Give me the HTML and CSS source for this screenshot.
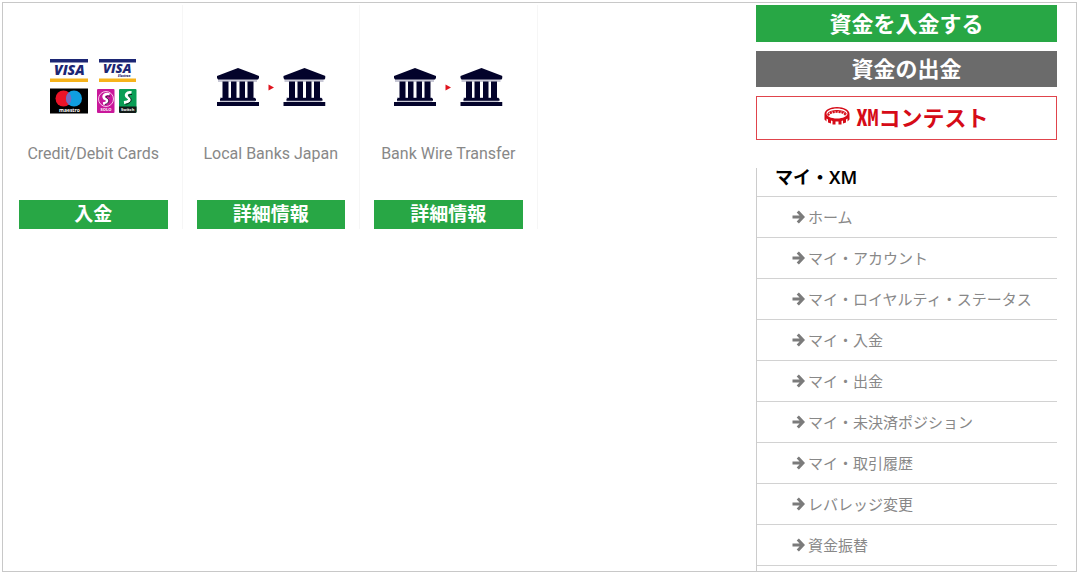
FILE: index.html
```html
<!DOCTYPE html>
<html lang="ja">
<head>
<meta charset="utf-8">
<title>マイ・XM</title>
<link rel="stylesheet" href="styles.css">
</head>
<body>
<svg class="defs" width="0" height="0" aria-hidden="true">
  <symbol id="bank" viewBox="0 0 43 40">
    <path fill="#c9c9d6" d="M2 12h39v3H2zM4 30h35v6H4z"/>
    <g fill="#03032b">
      <path d="M22 1 43 9v2l-1 1.500H2L1 11V9z"/>
      <path d="M6.500 14.500h6V31h-6zM15 14.500h5.500V31H15zM23.500 14.500H29V31h-5.500zM31.500 14.500h6V31h-6z"/>
      <path d="M5 31h34l1 1v1.700H4V32zM1 35h42v4H1z"/>
    </g>
  </symbol>
  <symbol id="transfer" viewBox="0 0 110 40">
    <use href="#bank" width="43" height="40"/>
    <path fill="#e0141e" d="m52.500 17.500 5.500 3-5.500 3z"/>
    <use href="#bank" x="66.500" width="43" height="40"/>
  </symbol>
  <symbol id="arrow" viewBox="0 0 13 14">
    <path d="M.500 7H11M5.800 1.500 11 7l-5.200 5.500" fill="none" stroke="#7b7b7b" stroke-width="3"/>
  </symbol>
</svg>
<div class="frame">
  <main class="methods">
    <article class="method">
      <div class="logo">
        <svg width="88" height="57" viewBox="0 0 88 57" role="img" aria-label="Visa, Maestro">
          <g font-family="Open Sans, sans-serif" font-weight="800" font-style="italic" fill="#1c2674">
            <path d="M1 1h38v3.500H1zM50 1h37v3.500H50z"/>
            <path fill="#f6b31b" d="M1 20.500h38V24H1zM50 20.500h37V24H50z"/>
            <text x="5" y="17" font-size="14">VISA</text>
            <text x="54" y="15" font-size="13">VISA</text>
            <text x="69" y="19" font-size="3">Electron</text>
          </g>
          <path d="M1 30.500h38V55.500H1z"/>
          <circle cx="14.500" cy="40.500" r="8" fill="#eb1328"/>
          <circle cx="25" cy="40.500" r="8" fill="#109ee0"/>
          <path fill="#786bc0" d="M19.700 34.500a8 8 0 0 1 0 12 8 8 0 0 1 0-12z"/>
          <text x="10" y="53.500" font-family="Open Sans, sans-serif" font-weight="700" font-size="5" fill="#fff">maestro</text>
          <rect x="48" y="31" width="17.500" height="24" rx="1" fill="#c9189b"/>
          <circle cx="57" cy="41" r="7.500" fill="none" stroke="#f6c5e8"/>
          <path d="M60.500 36.500c-4.500-1.500-7.500 1.500-5 4 4 1.300 4 4.500-1.500 5" fill="none" stroke="#fff" stroke-width="2.600"/>
          <path d="M61 38.200c-3-1-4.500.5-3.500 1.800 3.500 1.500 3 5-1.500 6.500" fill="none" stroke="#321039"/>
          <text x="51.500" y="53" font-family="Open Sans, sans-serif" font-weight="700" font-size="4" fill="#fff">SOLO</text>
          <rect x="70" y="31" width="17.500" height="24" rx="1" fill="#099e55"/>
          <path d="M70 48.500h17.500V54l-1 1H71l-1-1z" fill="#111b18"/>
          <path d="M82.500 34.500c-5-1-6.500 3-4 4.700 3.500 1.700 3 4.500-3.500 5.300" fill="none" stroke="#fff" stroke-width="2.800"/>
          <path d="M83 36.500c-3-.5-4 1-2.500 2.500 3.500 3 1 6.500-4 7.300" fill="none" stroke="#111b18"/>
          <text x="72" y="52.500" font-family="Open Sans, sans-serif" font-weight="700" font-size="4" fill="#fff">Switch</text>
        </svg>
      </div>
      <h2 class="name">Credit/Debit Cards</h2>
      <button class="action" type="button">入金</button>
    </article>
    <article class="method">
      <div class="logo"><svg width="110" height="40" aria-hidden="true"><use href="#transfer"/></svg></div>
      <h2 class="name">Local Banks Japan</h2>
      <button class="action" type="button">詳細情報</button>
    </article>
    <article class="method">
      <div class="logo"><svg width="110" height="40" aria-hidden="true"><use href="#transfer"/></svg></div>
      <h2 class="name">Bank Wire Transfer</h2>
      <button class="action" type="button">詳細情報</button>
    </article>
  </main>
  <aside class="side">
    <button class="cta deposit" type="button">資金を入金する</button>
    <button class="cta withdraw" type="button">資金の出金</button>
    <button class="cta contest" type="button">
      <svg width="26" height="18" viewBox="0 0 26 18" aria-hidden="true">
        <path fill="#d60b17" fill-rule="evenodd" d="M13 0C20 0 25.500 3 25.500 7v5.500l-2 2v-3l-1.500 1v3l-3 1v-3l-1.500.4V17.500h-3V14.500h-3v3h-3V13.900L7 13.500v3l-3-1v-3l-1.500-1v3l-2-2V7C.500 3 6 0 13 0zM13 1.500C7 1.500 2.500 3.800 2.500 6.500S7 11.500 13 11.500 23.500 9.200 23.500 6.500 19 1.500 13 1.500z"/>
        <path fill="none" stroke="#d60b17" stroke-width="2.200" stroke-dasharray="2.200 .7" d="M4 8.500C6 3.500 20 3.500 22 8.500"/>
        <path fill="none" stroke="#d60b17" d="M3.500 6.500C7 2.500 19 2.500 22.500 6.500"/>
      </svg>
      <span>XMコンテスト</span>
    </button>
    <nav class="menu" aria-labelledby="menu-title">
      <h2 class="menu-title" id="menu-title">マイ・XM</h2>
      <ul class="links">
        <li><a href="#"><svg width="13" height="14" aria-hidden="true"><use href="#arrow"/></svg>ホーム</a></li>
        <li><a href="#"><svg width="13" height="14" aria-hidden="true"><use href="#arrow"/></svg>マイ・アカウント</a></li>
        <li><a href="#"><svg width="13" height="14" aria-hidden="true"><use href="#arrow"/></svg>マイ・ロイヤルティ・ステータス</a></li>
        <li><a href="#"><svg width="13" height="14" aria-hidden="true"><use href="#arrow"/></svg>マイ・入金</a></li>
        <li><a href="#"><svg width="13" height="14" aria-hidden="true"><use href="#arrow"/></svg>マイ・出金</a></li>
        <li><a href="#"><svg width="13" height="14" aria-hidden="true"><use href="#arrow"/></svg>マイ・未決済ポジション</a></li>
        <li><a href="#"><svg width="13" height="14" aria-hidden="true"><use href="#arrow"/></svg>マイ・取引履歴</a></li>
        <li><a href="#"><svg width="13" height="14" aria-hidden="true"><use href="#arrow"/></svg>レバレッジ変更</a></li>
        <li><a href="#"><svg width="13" height="14" aria-hidden="true"><use href="#arrow"/></svg>資金振替</a></li>
      </ul>
    </nav>
  </aside>
</div>
</body>
</html>
```
FILE: styles.css
```css
* {
  box-sizing: border-box;
}

body {
  margin: 0;
  padding: 2px 3px 3px 2px;
  background: #fff;
  font-family: "Noto Sans", "Noto Sans CJK JP", sans-serif;
}

.defs {
  display: block;
}

h2,
ul {
  margin: 0;
  padding: 0;
}

button {
  padding: 0 0 4px;
  border: 0;
  border-radius: 0;
  font-family: "Noto Sans CJK JP", sans-serif;
  font-weight: 700;
  color: #fff;
  cursor: pointer;
}

.frame {
  display: flex;
  min-height: calc(100vh - 5px);
  padding: 2px 19px 0 2px;
  border: 1px solid #c8c8c8;
}

.methods {
  flex: 1;
  display: grid;
  grid-template-columns: repeat(4, 1fr);
  align-items: start;
  padding-right: 41px;
}

.method {
  display: flex;
  flex-direction: column;
  padding: 46px 14px 0;
  border-right: 1px solid #f6f6f6;
}

.method:last-child {
  padding-right: 14px;
}

.logo {
  display: flex;
  align-items: center;
  justify-content: center;
  height: 71px;
}

.name {
  margin: 22px 0 36px;
  font: 400 16px/20px Roboto, sans-serif;
  text-align: center;
  white-space: nowrap;
  color: #888;
}

.action {
  height: 29px;
  background: #28a745;
  font-size: 19px;
  line-height: 25px;
}

.side {
  flex: 0 0 301px;
  display: flex;
  flex-direction: column;
}

.cta {
  flex: none;
  height: 36px;
  margin-bottom: 9px;
  font-size: 22px;
  line-height: 30px;
}

.deposit {
  height: 37px;
  background: #28a745;
}

.withdraw {
  background: #6b6b6b;
}

.contest {
  display: flex;
  align-items: center;
  justify-content: center;
  gap: 6px;
  height: 44px;
  margin-bottom: 28px;
  border: 1px solid #e0444c;
  background: #fff;
  color: #d60b17;
  font-feature-settings: "hwid";
}

.menu {
  flex: 1;
  border-left: 1px solid #ccc;
}

.menu-title {
  height: 29px;
  padding-left: 18px;
  border-bottom: 1px solid #d2d2d2;
  font-size: 18px;
  line-height: 19px;
  font-weight: 600;
  color: #000;
}

.links {
  list-style: none;
}

.links li {
  border-bottom: 1px solid #d2d2d2;
}

.links a {
  display: flex;
  align-items: center;
  gap: 3px;
  height: 40px;
  padding-left: 35px;
  font-size: 15px;
  line-height: 20px;
  font-family: "Noto Sans CJK JP", sans-serif;
  color: #888;
  text-decoration: none;
}
```
